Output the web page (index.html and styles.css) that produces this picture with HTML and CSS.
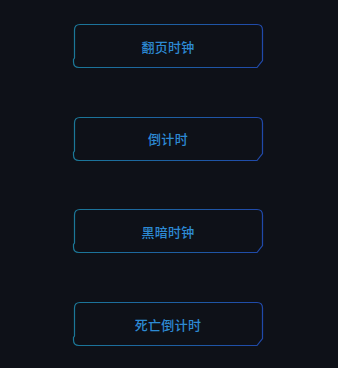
FILE: index.html
```html
<!DOCTYPE html>
<html lang="zh">
<head>
<meta charset="utf-8">
<link rel="stylesheet" href="styles.css">
</head>
<body>
<div class="menu">
  <button class="btn">
    <svg class="frame" viewBox="0 0 190 44" preserveAspectRatio="none"><defs><linearGradient id="g" x1="0" y1="0" x2="1" y2="0"><stop offset="0" stop-color="#1b7898"/><stop offset="1" stop-color="#2049aa"/></linearGradient></defs><path d="M1.5,6 Q1.5,0.5 7,0.5 H184 Q189.5,0.5 189.5,6 V36.5 L184,43.5 H6 Q0.5,43.5 0.5,38 V35.5 L1.5,34 Z" fill="none" stroke="url(#g)" stroke-width="1.2"/></svg>
    <span class="label">翻页时钟</span>
  </button>
  <button class="btn">
    <svg class="frame" viewBox="0 0 190 44" preserveAspectRatio="none"><path d="M1.5,6 Q1.5,0.5 7,0.5 H184 Q189.5,0.5 189.5,6 V36.5 L184,43.5 H6 Q0.5,43.5 0.5,38 V35.5 L1.5,34 Z" fill="none" stroke="url(#g)" stroke-width="1.2"/></svg>
    <span class="label">倒计时</span>
  </button>
  <button class="btn">
    <svg class="frame" viewBox="0 0 190 44" preserveAspectRatio="none"><path d="M1.5,6 Q1.5,0.5 7,0.5 H184 Q189.5,0.5 189.5,6 V36.5 L184,43.5 H6 Q0.5,43.5 0.5,38 V35.5 L1.5,34 Z" fill="none" stroke="url(#g)" stroke-width="1.2"/></svg>
    <span class="label">黑暗时钟</span>
  </button>
  <button class="btn">
    <svg class="frame" viewBox="0 0 190 44" preserveAspectRatio="none"><path d="M1.5,6 Q1.5,0.5 7,0.5 H184 Q189.5,0.5 189.5,6 V36.5 L184,43.5 H6 Q0.5,43.5 0.5,38 V35.5 L1.5,34 Z" fill="none" stroke="url(#g)" stroke-width="1.2"/></svg>
    <span class="label">死亡倒计时</span>
  </button>
</div>
</body>
</html>
```
FILE: styles.css
```css
html, body {
  margin: 0;
  padding: 0;
  background: #0e1118;
  height: 100%;
}
.menu {
  display: flex;
  flex-direction: column;
  align-items: flex-start;
  gap: 48.7px;
  padding: 24px 0 0 73px;
}
.btn {
  position: relative;
  width: 190px;
  height: 44px;
  padding: 0;
  border: none;
  background: transparent;
  display: flex;
  align-items: center;
  justify-content: center;
  cursor: pointer;
}
.frame {
  position: absolute;
  inset: 0;
  width: 100%;
  height: 100%;
  overflow: visible;
}
.label {
  position: relative;
  font-family: "Noto Sans CJK SC", "Noto Sans", sans-serif;
  font-size: 13px;
  font-weight: 500;
  color: #2d8ad4;
  letter-spacing: 0.3px;
}
```
